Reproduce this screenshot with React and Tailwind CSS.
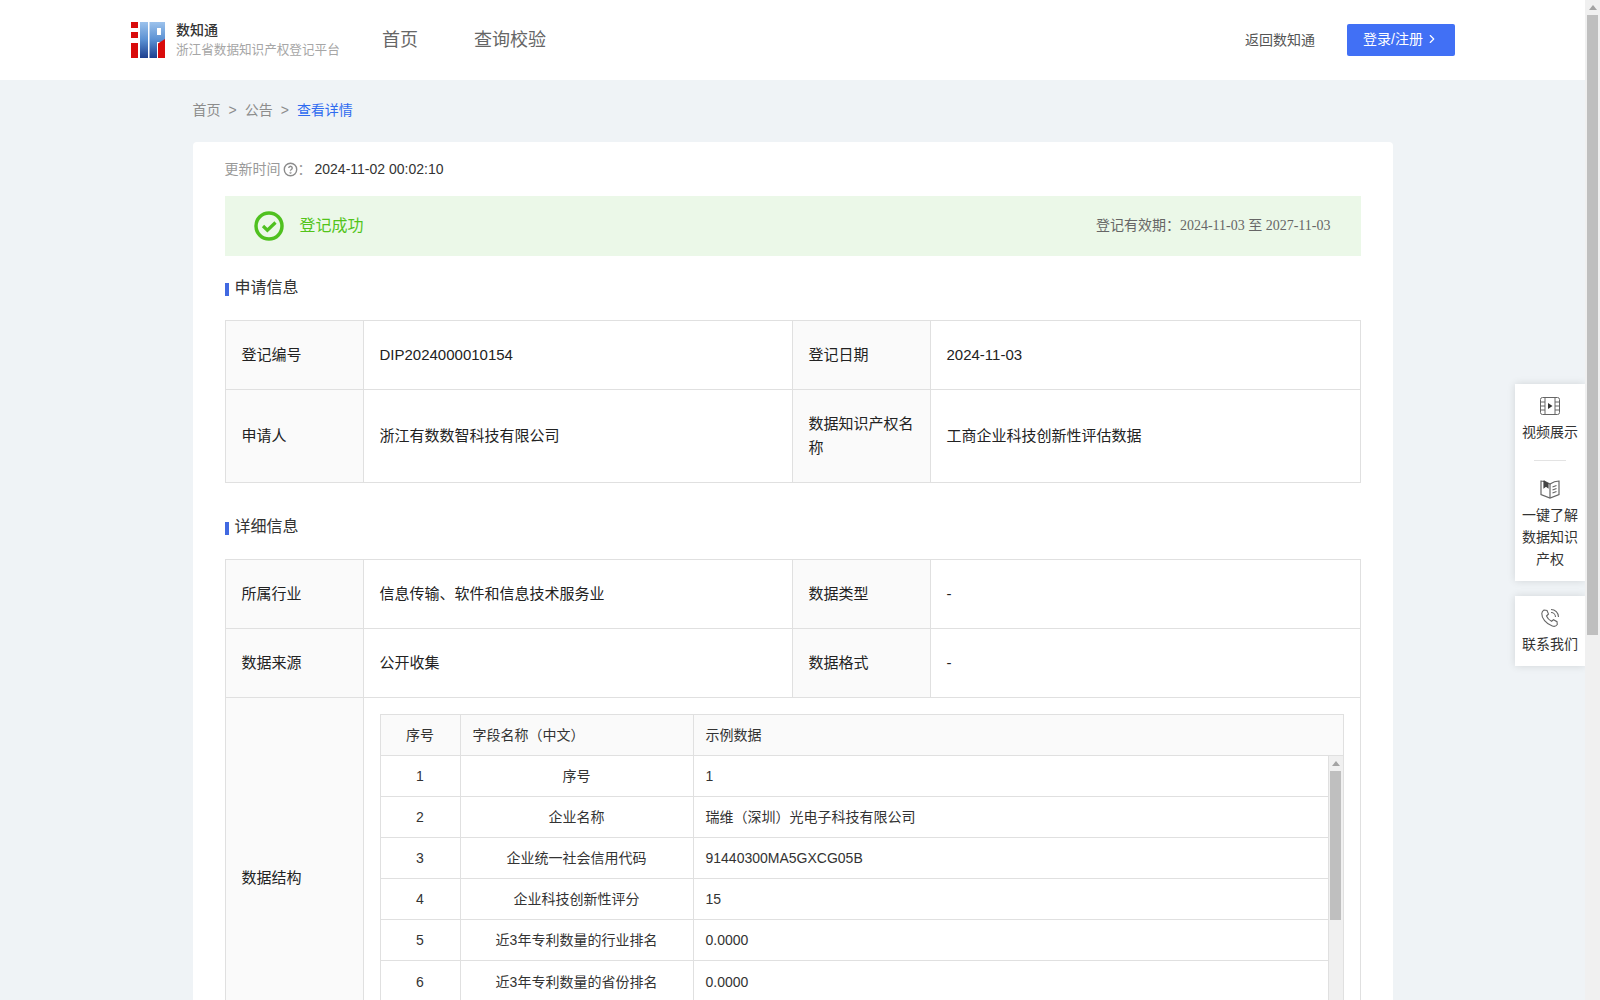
import { ChevronRight } from "lucide-react";

const font = "font-['Liberation_Sans','Noto_Sans_CJK_SC',sans-serif]";

const fields = [
  ["1", "序号", "1"],
  ["2", "企业名称", "瑞维（深圳）光电子科技有限公司"],
  ["3", "企业统一社会信用代码", "91440300MA5GXCG05B"],
  ["4", "企业科技创新性评分", "15"],
  ["5", "近3年专利数量的行业排名", "0.0000"],
  ["6", "近3年专利数量的省份排名", "0.0000"],
];

function Logo() {
  return (
    <svg width="34" height="36" viewBox="0 0 34 36" className="shrink-0">
      <defs>
        <linearGradient id="logoBlue" x1="0" y1="0" x2="0" y2="1">
          <stop offset="0" stopColor="#9cc2ec" />
          <stop offset="0.5" stopColor="#5a90d2" />
          <stop offset="1" stopColor="#1d3f8f" />
        </linearGradient>
      </defs>
      <rect x="0" y="0" width="7" height="6" fill="#d90b0b" />
      <rect x="0" y="10" width="7" height="6" fill="#d90b0b" />
      <rect x="0" y="21" width="7" height="15" fill="#d90b0b" />
      <rect x="9" y="0" width="8" height="36" fill="url(#logoBlue)" />
      <path d="M18.500 0H34v20H26v16h-7.500z" fill="url(#logoBlue)" />
      <rect x="26" y="6" width="4" height="7" fill="#fff" />
      <path d="M27 36V21.500L34 17v19z" fill="#d90b0b" />
    </svg>
  );
}

function SectionTitle({ children, className }) {
  return (
    <div className={`flex items-center gap-[6px] text-base leading-[23px] text-[#333] ${className}`}>
      <span className="mt-[3px] h-[13px] w-[4px] bg-[#4169e1]" />
      {children}
    </div>
  );
}

function Label({ children, className = "" }) {
  return <div className={`flex items-center bg-[#fafafa] px-[16px] text-[15px] leading-[24px] text-[#222] ${className}`}>{children}</div>;
}

function Value({ children, className = "" }) {
  return <div className={`flex items-center px-[16px] text-[15px] text-[#222] ${className}`}>{children}</div>;
}

function ScrollUp() {
  return <div className="mx-auto h-0 w-0 border-x-[4px] border-b-[5px] border-x-transparent border-b-[#a3a3a3]" />;
}

export default function App() {
  return (
    <div className={`flex h-screen overflow-hidden bg-[#eff3f6] ${font}`}>
      <div className="relative min-w-0 flex-1 overflow-hidden">
        <header className="flex h-[80px] items-center bg-white pl-[131px] pr-[130px]">
          <Logo />
          <div className="ml-[11px] w-[206px]">
            <div className="text-sm font-medium leading-[20px] text-[#333]">数知通</div>
            <div className="text-[12.6px] leading-[20px] text-[#a6a6a6]">浙江省数据知识产权登记平台</div>
          </div>
          <nav className="flex gap-[56px] text-lg text-[#666]">
            <span>首页</span>
            <span>查询校验</span>
          </nav>
          <span className="ml-auto text-sm text-[#555]">返回数知通</span>
          <button className="ml-[32px] flex h-[32px] w-[108px] items-center justify-center gap-[2px] rounded-[2px] bg-[#4170f5] pb-[2px] text-sm text-white">
            登录/注册
            <ChevronRight size={14} />
          </button>
        </header>

        <main className="mx-auto w-[1200px]">
          <div className="flex h-[62px] items-center gap-[8px] pb-[2px] text-sm text-[#8c8c8c]">
            <span>首页</span>
            <span>&gt;</span>
            <span>公告</span>
            <span>&gt;</span>
            <span className="text-[#2f6bf0]">查看详情</span>
          </div>

          <div className="rounded-t-[4px] bg-white px-[32px] pt-[17px]">
            <div className="flex h-[20px] items-center text-sm text-[#333]">
              <span className="text-[#999]">更新时间</span>
              <svg width="15" height="15" viewBox="0 0 14 14" className="ml-[2px]" fill="none" stroke="#8c8c8c" strokeWidth="1.300">
                <circle cx="7" cy="7" r="5.800" />
                <path d="M5.400 5.600a1.600 1.600 0 1 1 2.400 1.400c-.5.3-.8.6-.8 1.200" />
                <circle cx="7" cy="10" r=".3" />
              </svg>
              <span className="mr-[3px] text-[#999]">：</span>
              <span>2024-11-02 00:02:10</span>
            </div>

            <div className="mt-[17px] flex h-[60px] items-center justify-between bg-[#ebf8e8] pl-[29px] pr-[30px]">
              <div className="flex items-center gap-[16px] pb-[1px] text-base text-[#52c41a]">
                <svg width="30" height="30" viewBox="0 0 30 30" fill="none">
                  <circle cx="15" cy="15" r="13" stroke="#4fc11f" strokeWidth="3.500" />
                  <path d="M9 15l4.400 4.200L21.500 11.500" stroke="#4fc11f" strokeWidth="3.200" />
                </svg>
                登记成功
              </div>
              <div className="pb-[1px] text-sm text-[#666]">
                登记有效期：<span className="font-['Liberation_Serif','Noto_Sans_CJK_SC',serif]">2024-11-03 至 2027-11-03</span>
              </div>
            </div>

            <SectionTitle className="mt-[20px]">申请信息</SectionTitle>

            <div className="mt-[21px] grid grid-cols-[138px_429px_138px_1fr] divide-y divide-[#e0e0e0] border border-[#e0e0e0]">
              <div className="col-span-4 grid h-[69px] grid-cols-subgrid divide-x divide-[#e0e0e0]">
                <Label>登记编号</Label>
                <Value>DIP2024000010154</Value>
                <Label>登记日期</Label>
                <Value>2024-11-03</Value>
              </div>
              <div className="col-span-4 grid h-[92px] grid-cols-subgrid divide-x divide-[#e0e0e0]">
                <Label>申请人</Label>
                <Value>浙江有数数智科技有限公司</Value>
                <Label>数据知识产权名称</Label>
                <Value>工商企业科技创新性评估数据</Value>
              </div>
            </div>

            <SectionTitle className="mt-[32px]">详细信息</SectionTitle>

            <div className="mt-[21px] grid grid-cols-[138px_429px_138px_1fr] divide-y divide-[#e0e0e0] border border-[#e0e0e0]">
              <div className="col-span-4 grid h-[69px] grid-cols-subgrid divide-x divide-[#e0e0e0]">
                <Label>所属行业</Label>
                <Value>信息传输、软件和信息技术服务业</Value>
                <Label>数据类型</Label>
                <Value>-</Value>
              </div>
              <div className="col-span-4 grid h-[69px] grid-cols-subgrid divide-x divide-[#e0e0e0]">
                <Label>数据来源</Label>
                <Value>公开收集</Value>
                <Label>数据格式</Label>
                <Value>-</Value>
              </div>
              <div className="col-span-4 grid h-[360px] grid-cols-subgrid divide-x divide-[#e0e0e0]">
                <Label>数据结构</Label>
                <div className="col-span-3 p-[16px]">
                  <div className="border border-[#e0e0e0] text-sm text-[#333]">
                    <div className="grid h-[40px] grid-cols-[80px_233px_1fr] items-center bg-[#fafafa]">
                      <div className="flex h-full items-center justify-center border-r border-[#e0e0e0]">序号</div>
                      <div className="flex h-full items-center border-r border-[#e0e0e0] px-[12px]">字段名称（中文）</div>
                      <div className="px-[12px]">示例数据</div>
                    </div>
                    <div className="flex border-t border-[#e0e0e0]">
                      <div className="min-w-0 flex-1 divide-y divide-[#e0e0e0]">
                        {fields.map((row) => (
                          <div key={row[0]} className="grid h-[41px] grid-cols-[80px_233px_1fr] items-center">
                            <div className="flex h-full items-center justify-center border-r border-[#e0e0e0]">{row[0]}</div>
                            <div className="flex h-full items-center justify-center border-r border-[#e0e0e0]">{row[1]}</div>
                            <div className="px-[12px]">{row[2]}</div>
                          </div>
                        ))}
                      </div>
                      <div className="w-[15px] border-l border-[#e0e0e0] bg-[#f0f0f0] pt-[5px]">
                        <ScrollUp />
                        <div className="mx-auto mt-[5px] h-[149px] w-[11px] bg-[#bfbfbf]" />
                      </div>
                    </div>
                  </div>
                </div>
              </div>
            </div>
          </div>
        </main>

        <aside className="absolute right-0 top-[384px] w-[70px] text-center text-sm leading-[22px] text-[#333]">
          <div className="bg-white pb-[11px] pt-[13px] shadow-[0_0_8px_rgba(0,0,0,0.12)]">
            <svg width="20" height="18" viewBox="0 0 20 18" className="mx-auto" fill="none" stroke="#666">
              <rect x="0.5" y="0.5" width="19" height="17" rx="2" />
              <path d="M5 .5v17M15 .5v17M.5 5H5M.5 9H5M.5 13H5M15 5h4.500M15 9h4.500M15 13h4.500" />
              <path d="M8 6l4.500 3L8 12z" fill="#333" stroke="none" />
            </svg>
            <div className="mt-[6px]">视频展示</div>
            <div className="mx-auto mb-[18px] mt-[17px] h-px w-[32px] bg-[#e3e3e3]" />
            <svg width="20" height="20" viewBox="0 0 20 20" className="mx-auto" fill="none" stroke="#666" strokeWidth="1.200">
              <path d="M1 2c3 0 6 1 9 3 3-2 6-3 9-3v13.500l-9 3.500-9-3.500z" />
              <path d="M10 5v14" />
              <path d="M4 1.500v7l2-1.500 2 1.500V4" fill="#444" stroke="#444" />
              <path d="M12.500 8l4-1.500M12.500 11l4-1.500M12.500 14l4-1.500" />
            </svg>
            <div className="mt-[5px]">一键了解<br />数据知识<br />产权</div>
          </div>
          <div className="mt-[15px] h-[70px] bg-white pt-[12px] shadow-[0_0_8px_rgba(0,0,0,0.12)]">
            <svg width="20" height="20" viewBox="0 0 20 20" className="mx-auto" fill="none" stroke="#666" strokeWidth="1.100">
              <path d="M4 2l3 .5 1.500 3.500-2 2c.8 2 2.500 4 5 5.300l2-1.600 3.500 2 .3 2.800c-1 1.500-3 2.200-5 1.500C6 16 1.500 10 1.800 5.500 1.900 4 2.800 2.700 4 2z" />
              <path d="M11 1.500a7.500 7.500 0 0 1 7.500 7.500M11 4.500A4.500 4.500 0 0 1 15.500 9" />
            </svg>
            <div className="mt-[5px]">联系我们</div>
          </div>
        </aside>
      </div>

      <div className="w-[15px] shrink-0 bg-[#f0f0f0] pt-[5px]">
        <ScrollUp />
        <div className="mx-auto mt-[5px] h-[620px] w-[11px] bg-[#bfbfbf]" />
      </div>
    </div>
  );
}
